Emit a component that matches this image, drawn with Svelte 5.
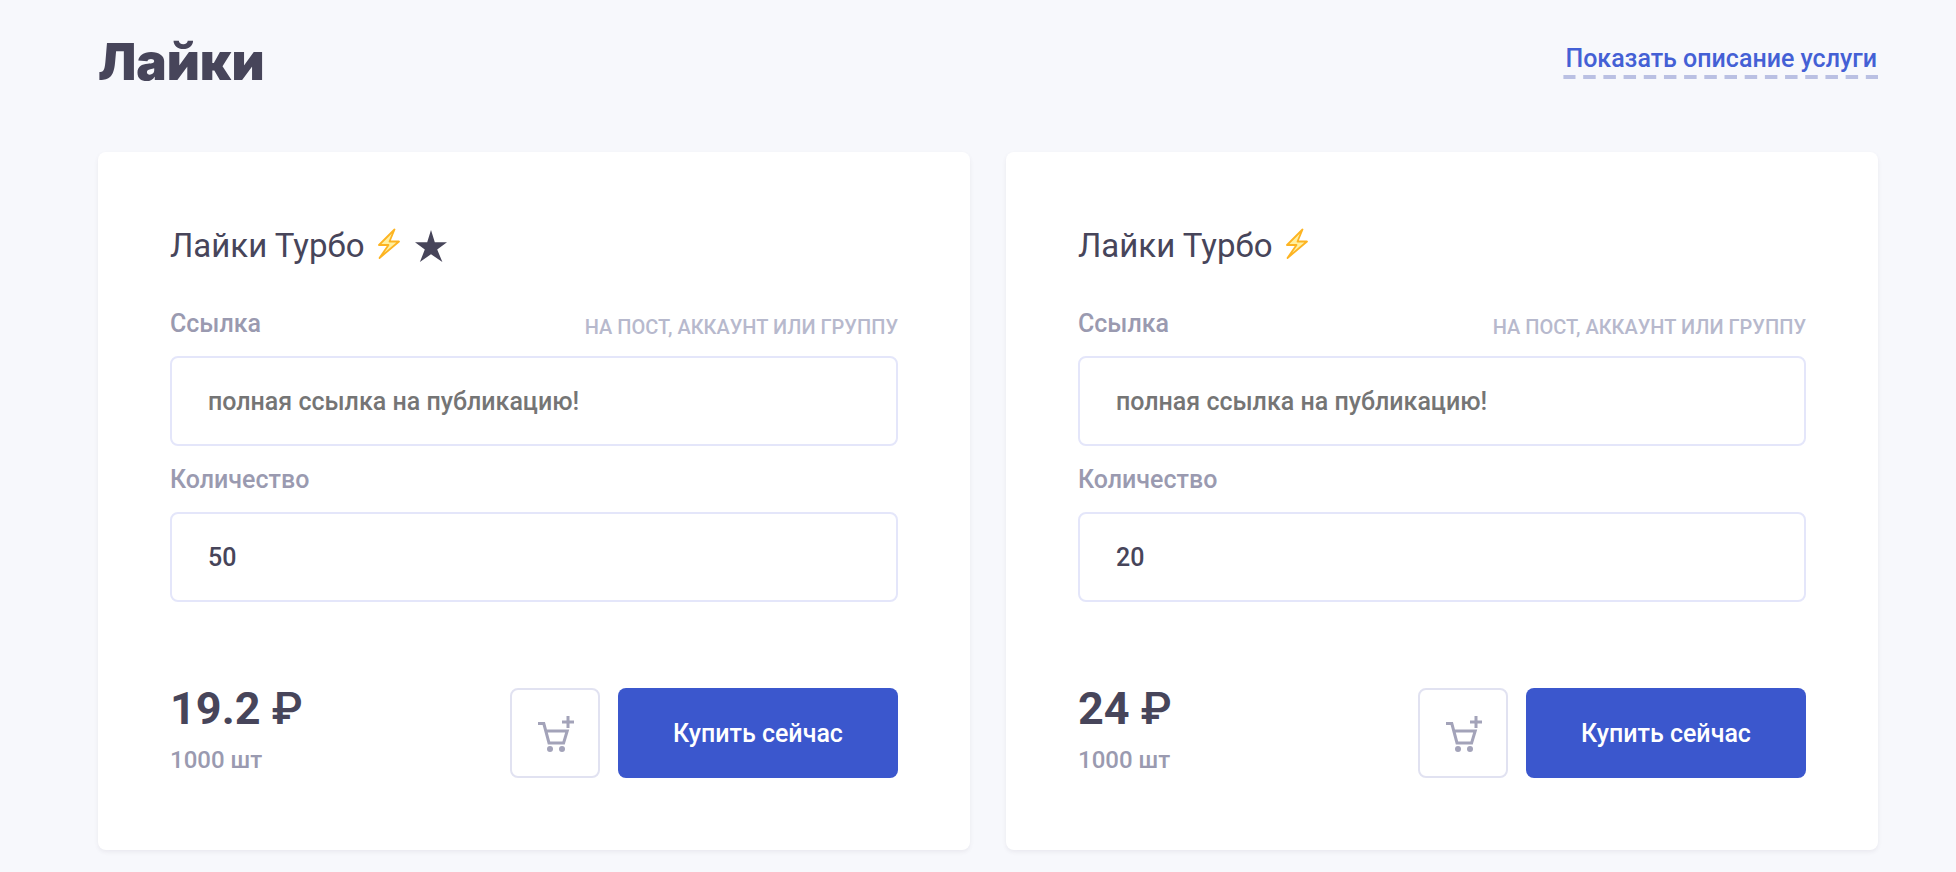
<script>
  const cards = [
    { id: 'first', title: 'Лайки Турбо', starred: true, amount: 50, price: '19.2' },
    { id: 'second', title: 'Лайки Турбо', starred: false, amount: 20, price: '24' },
  ];
</script>

<main class="page">
  <header class="head">
    <h1>Лайки</h1>
    <a class="describe" href="#description">Показать описание услуги</a>
  </header>

  <div class="cards">
    {#each cards as card (card.id)}
      <form class="card" onsubmit={(e) => e.preventDefault()}>
        <h2>
          {card.title}
          <svg class="bolt" viewBox="0 0 24 32" aria-hidden="true">
            <path d="M17.5 1.5 2 17H11.5L2.5 30 22 13.5H12.5Z" fill="#fff0a0" stroke="#fdb422" stroke-width="1.8" stroke-linejoin="round" />
          </svg>
          {#if card.starred}
            <svg class="star" viewBox="0 0 32 32" aria-hidden="true">
              <path d="M16 0 19.8 12.2H32L22.2 19.6 27.4 32 16 24.2 4.9 32 9.8 19.6 0 12.2H12.2Z" fill="#47455a" />
            </svg>
          {/if}
        </h2>

        <div class="label-row">
          <label for="{card.id}-link">Ссылка</label>
          <span class="hint">на пост, аккаунт или группу</span>
        </div>
        <input id="{card.id}-link" type="text" placeholder="полная ссылка на публикацию!" />

        <div class="label-row">
          <label for="{card.id}-amount">Количество</label>
        </div>
        <input id="{card.id}-amount" type="text" inputmode="numeric" value={card.amount} />

        <div class="foot">
          <div class="cost">
            <strong>{card.price} <span class="currency">₽</span></strong>
            <span class="unit">1000 шт</span>
          </div>
          <button class="cart" type="button" aria-label="В корзину">
            <svg viewBox="0 0 36 36" aria-hidden="true">
              <path d="M0 7.5H5.8L11 27H25.6L29.2 15H8M30 0V12M24 6H36" fill="none" stroke="#a3a3b9" stroke-width="3" />
              <circle cx="12" cy="33" r="3" fill="#a3a3b9" />
              <circle cx="24" cy="33" r="3" fill="#a3a3b9" />
            </svg>
          </button>
          <button class="buy" type="submit">Купить сейчас</button>
        </div>
      </form>
    {/each}
  </div>
</main>

<style>
  :global(body) {
    margin: 0;
    background: #f7f8fc;
  }
  .page {
    box-sizing: border-box;
    padding: 24px 78px 22px 98px;
    font-family: Roboto, "Liberation Sans", sans-serif;
    font-size: 25px;
    font-weight: 500;
    color: #47455a;
  }
  .head {
    display: flex;
    justify-content: space-between;
    align-items: flex-start;
    height: 128px;
  }
  h1 {
    margin: 0;
    font-family: Inter, Roboto, sans-serif;
    font-size: 51px;
    font-weight: 900;
    line-height: 76px;
  }
  .describe {
    position: relative;
    margin-top: 17px;
    line-height: 36px;
    padding: 0 1px 2px 2px;
    color: #4460d5;
    text-decoration: none;
  }
  .describe::after {
    content: "";
    position: absolute;
    left: 0;
    right: -8px;
    bottom: 0;
    height: 4px;
    background: linear-gradient(90deg, #bac0e3 60%, transparent 60%) 0 0 / 20px 4px round;
    clip-path: inset(0 8px 0 0);
  }
  .cards {
    display: grid;
    grid-template-columns: 1fr 1fr;
    gap: 36px;
  }
  .card {
    padding: 72px;
    background: #fff;
    border-radius: 8px;
    box-shadow: 0 2px 4px rgba(71, 69, 90, 0.08);
  }
  h2 {
    display: flex;
    align-items: center;
    margin: 0 0 32px;
    font-size: 33px;
    font-weight: 400;
    line-height: 44px;
  }
  .bolt {
    width: 24px;
    height: 32px;
    margin-left: 12px;
    margin-bottom: 4px;
  }
  .star {
    width: 32px;
    height: 32px;
    margin-left: 14px;
  }
  .label-row {
    display: flex;
    justify-content: space-between;
    align-items: flex-start;
    height: 56px;
    line-height: 48px;
    color: #9a9ab0;
  }
  .hint {
    font-size: 20px;
    line-height: 54px;
    text-transform: uppercase;
    color: #b7b9cd;
  }
  input {
    display: block;
    box-sizing: border-box;
    width: 100%;
    height: 90px;
    padding: 0 36px;
    border: 2px solid #e4e6fa;
    border-radius: 8px;
    background: #fff;
    font: inherit;
    color: #47455a;
  }
  input::placeholder {
    color: #757575;
  }
  input + .label-row {
    margin-top: 10px;
  }
  .foot {
    display: flex;
    gap: 18px;
    margin-top: 86px;
  }
  .cost {
    display: flex;
    flex-direction: column;
    margin-right: auto;
  }
  .cost strong {
    font-size: 45px;
    line-height: 42px;
  }
  .currency {
    font-weight: 500;
  }
  .unit {
    margin-top: 12px;
    font-size: 24px;
    line-height: 36px;
    color: #9a9ab0;
  }
  button {
    height: 90px;
    border-radius: 8px;
    font: inherit;
    cursor: pointer;
  }
  .cart {
    display: grid;
    place-items: center;
    width: 90px;
    padding: 2px 0 0 2px;
    border: 2px solid #e1e2f1;
    background: #fff;
  }
  .cart svg {
    width: 36px;
    height: 36px;
  }
  .buy {
    width: 280px;
    padding: 0;
    border: 0;
    background: #3b57cd;
    color: #fff;
  }
</style>
